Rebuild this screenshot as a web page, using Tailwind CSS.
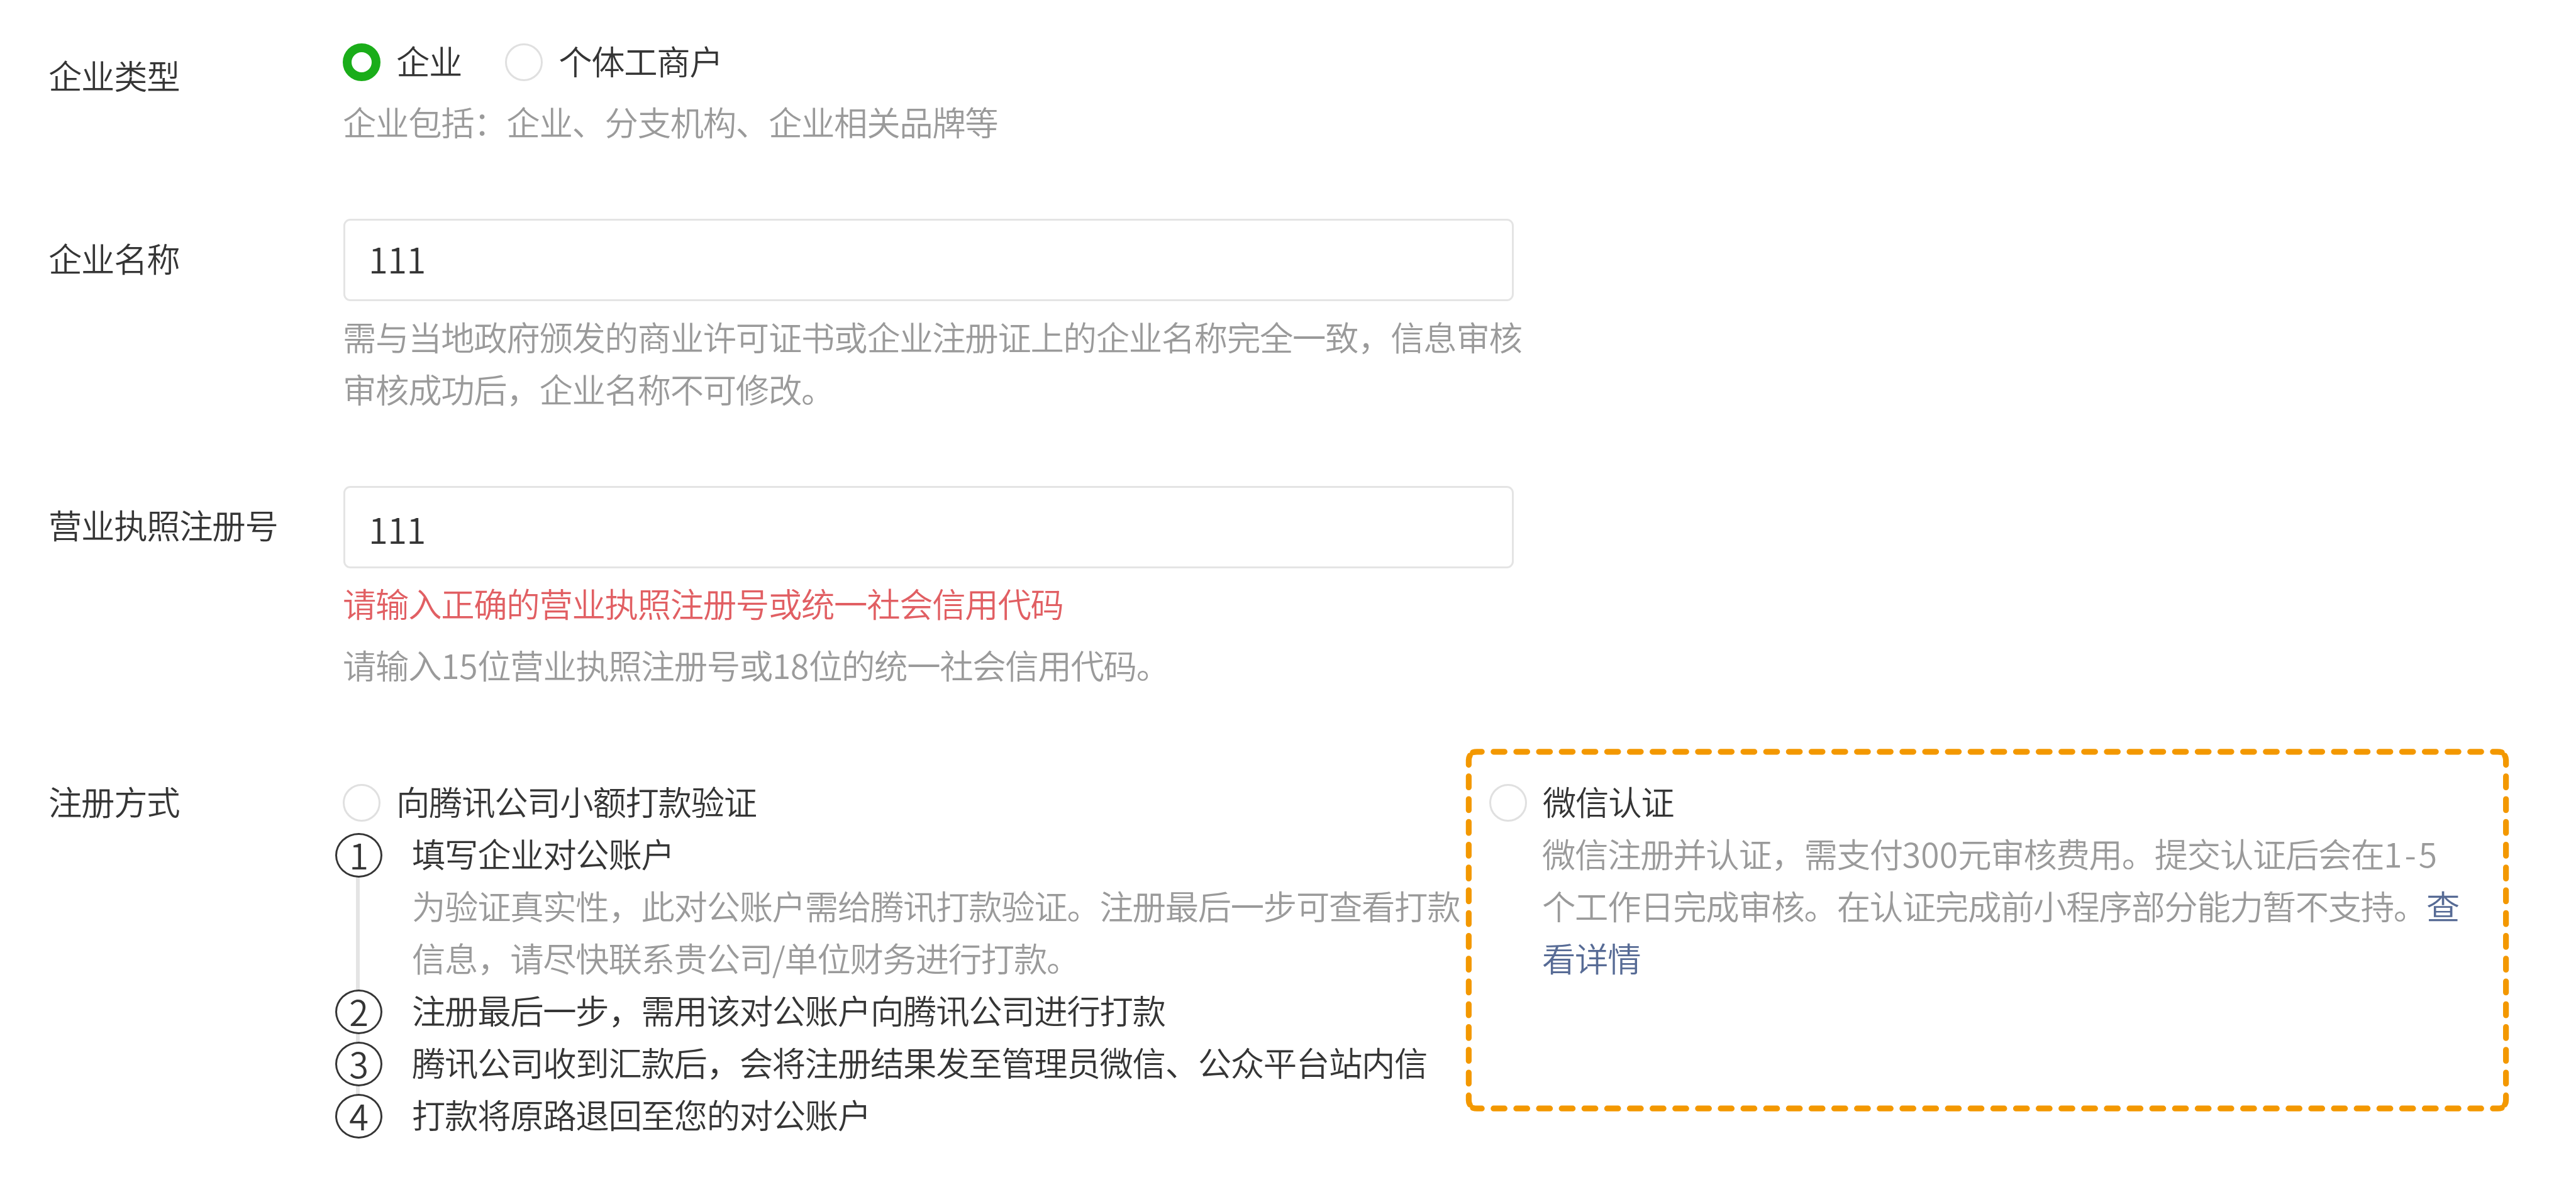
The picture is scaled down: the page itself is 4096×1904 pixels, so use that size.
<!DOCTYPE html>
<html lang="zh-CN">
<head>
    <meta charset="UTF-8">
    <meta name="viewport" content="width=device-width, initial-scale=1.0">
    <title>企业信息登记</title>
    <script src="https://cdn.jsdelivr.net/npm/@tailwindcss/browser@4"></script>
</head>
<body class="bg-white font-['Noto_Sans_CJK_SC',sans-serif] font-[350] text-[53.4px] tracking-[-1.32px] leading-[83px] text-[#353535]">
    <form class="flex flex-col w-[4096px] h-[1904px] pl-[77px] overflow-hidden">
        <!-- 企业类型 -->
        <div class="flex h-[348px] pt-[54px]">
            <div class="w-[468px] pt-[23px]">企业类型</div>
            <div>
                <div class="flex">
                    <span class="mt-[15px] size-[60px] rounded-full border-[14px] border-[#1aad19]"></span>
                    <span class="ml-[25px]">企业</span>
                    <span class="mt-[15px] ml-[69px] size-[60px] rounded-full border-3 border-[#e0e0e0]"></span>
                    <span class="ml-[25px]">个体工商户</span>
                </div>
                <p class="mt-[14px] text-[#9a9a9a]">企业包括：企业、分支机构、企业相关品牌等</p>
            </div>
        </div>

        <!-- 企业名称 -->
        <div class="flex h-[425px]">
            <div class="w-[468px] pt-[20px]">企业名称</div>
            <div>
                <div class="ml-px w-[1861px] h-[131px] rounded-[11px] border-3 border-[#e4e4e4] pl-[37px] pt-[18px] text-[56px] tracking-[-0.5px]">111</div>
                <p class="mt-[14px] whitespace-nowrap text-[#9a9a9a]">需与当地政府颁发的商业许可证书或企业注册证上的企业名称完全一致，信息审核<br>审核成功后，企业名称不可修改。</p>
            </div>
        </div>

        <!-- 营业执照注册号 -->
        <div class="flex h-[418px]">
            <div class="w-[468px] pt-[19px]">营业执照注册号</div>
            <div>
                <div class="ml-px w-[1861px] h-[131px] rounded-[11px] border-3 border-[#e4e4e4] pl-[37px] pt-[23px] text-[56px] tracking-[-0.5px]">111</div>
                <p class="mt-[13px] text-[#e15f63]">请输入正确的营业执照注册号或统一社会信用代码</p>
                <p class="mt-[15px] text-[#9a9a9a]">请输入<span class="tracking-[-0.3px]">15</span>位营业执照注册号或<span class="tracking-[-0.3px]">18</span>位的统一社会信用代码。</p>
            </div>
        </div>

        <!-- 注册方式 -->
        <div class="flex">
            <div class="w-[456px] pt-[41px]">注册方式</div>
            <div class="w-[1797px] pt-[41px]">
                <div class="flex pl-[12px]">
                    <span class="mt-[15px] size-[60px] rounded-full border-3 border-[#e0e0e0]"></span>
                    <span class="ml-[25px]">向腾讯公司小额打款验证</span>
                </div>
                <ol class="relative">
                    <li class="absolute left-[33px] top-[42px] w-[6px] h-[415px] bg-[#e4e4e4]"></li>
                    <li class="relative flex">
                        <span class="flex items-center justify-center mt-[10px] mr-[47px] w-[75px] h-[71px] rounded-[50%] border-3 border-[#353535] bg-white pb-[5px] text-[56px] tracking-normal">1</span>
                        <div class="whitespace-nowrap">填写企业对公账户
                            <p class="text-[#9a9a9a]">为验证真实性，此对公账户需给腾讯打款验证。注册最后一步可查看打款<br>信息，请尽快联系贵公司/单位财务进行打款。</p>
                        </div>
                    </li>
                    <li class="relative flex">
                        <span class="flex items-center justify-center mt-[10px] mr-[47px] w-[75px] h-[71px] rounded-[50%] border-3 border-[#353535] bg-white pb-[5px] text-[56px] tracking-normal">2</span>
                        注册最后一步，需用该对公账户向腾讯公司进行打款
                    </li>
                    <li class="relative flex">
                        <span class="flex items-center justify-center mt-[10px] mr-[47px] w-[75px] h-[71px] rounded-[50%] border-3 border-[#353535] bg-white pb-[5px] text-[56px] tracking-normal">3</span>
                        腾讯公司收到汇款后，会将注册结果发至管理员微信、公众平台站内信
                    </li>
                    <li class="relative flex">
                        <span class="flex items-center justify-center mt-[10px] mr-[47px] w-[75px] h-[71px] rounded-[50%] border-3 border-[#353535] bg-white pb-[5px] text-[56px] tracking-normal">4</span>
                        打款将原路退回至您的对公账户
                    </li>
                </ol>
            </div>

            <!-- 虚线高亮框 -->
            <div class="relative w-[1660px] h-[577px] pt-[41px] pl-[38px]">
                <svg class="absolute left-0 top-0 w-[1660px] h-[577px]" viewBox="0 0 1660 577.4" fill="none" stroke="#f39800" stroke-width="9.2" stroke-linecap="round">
                    <path d="M44.3 4.8H1617M44.3 572.6H1617" stroke-dasharray="17.5 18.64"/>
                    <path d="M4.8 43.9V534M1655.2 43.9V534" stroke-dasharray="17.6 18.67"/>
                    <path d="M25.6 4.8H18Q14 4.8 11.3 5.8M4.8 25.6V18Q4.8 14 6.6 11"/>
                    <path d="M1634.4 4.8H1642Q1646 4.8 1648.7 5.8M1655.2 25.6V18Q1655.2 14 1653.4 11"/>
                    <path d="M25.6 572.6H18Q14 572.6 11.3 571.6M4.8 551.8V559.4Q4.8 563.4 6.6 566.4"/>
                    <path d="M1634.4 572.6H1642Q1646 572.6 1648.7 571.6M1655.2 551.8V559.4Q1655.2 563.4 1653.4 566.4"/>
                </svg>
                <div class="flex">
                    <span class="mt-[15px] size-[60px] rounded-full border-3 border-[#e0e0e0]"></span>
                    <span class="ml-[25px]">微信认证</span>
                </div>
                <p class="ml-[84px] whitespace-nowrap text-[#9a9a9a]">微信注册并认证，需支付<span class="tracking-[0.2px]">300</span>元审核费用。提交认证后会在<span class="tracking-[4px]">1-5</span><br>个工作日完成审核。在认证完成前小程序部分能力暂不支持。<a class="text-[#576b95]">查<br>看详情</a></p>
            </div>
        </div>
    </form>
</body>
</html>
